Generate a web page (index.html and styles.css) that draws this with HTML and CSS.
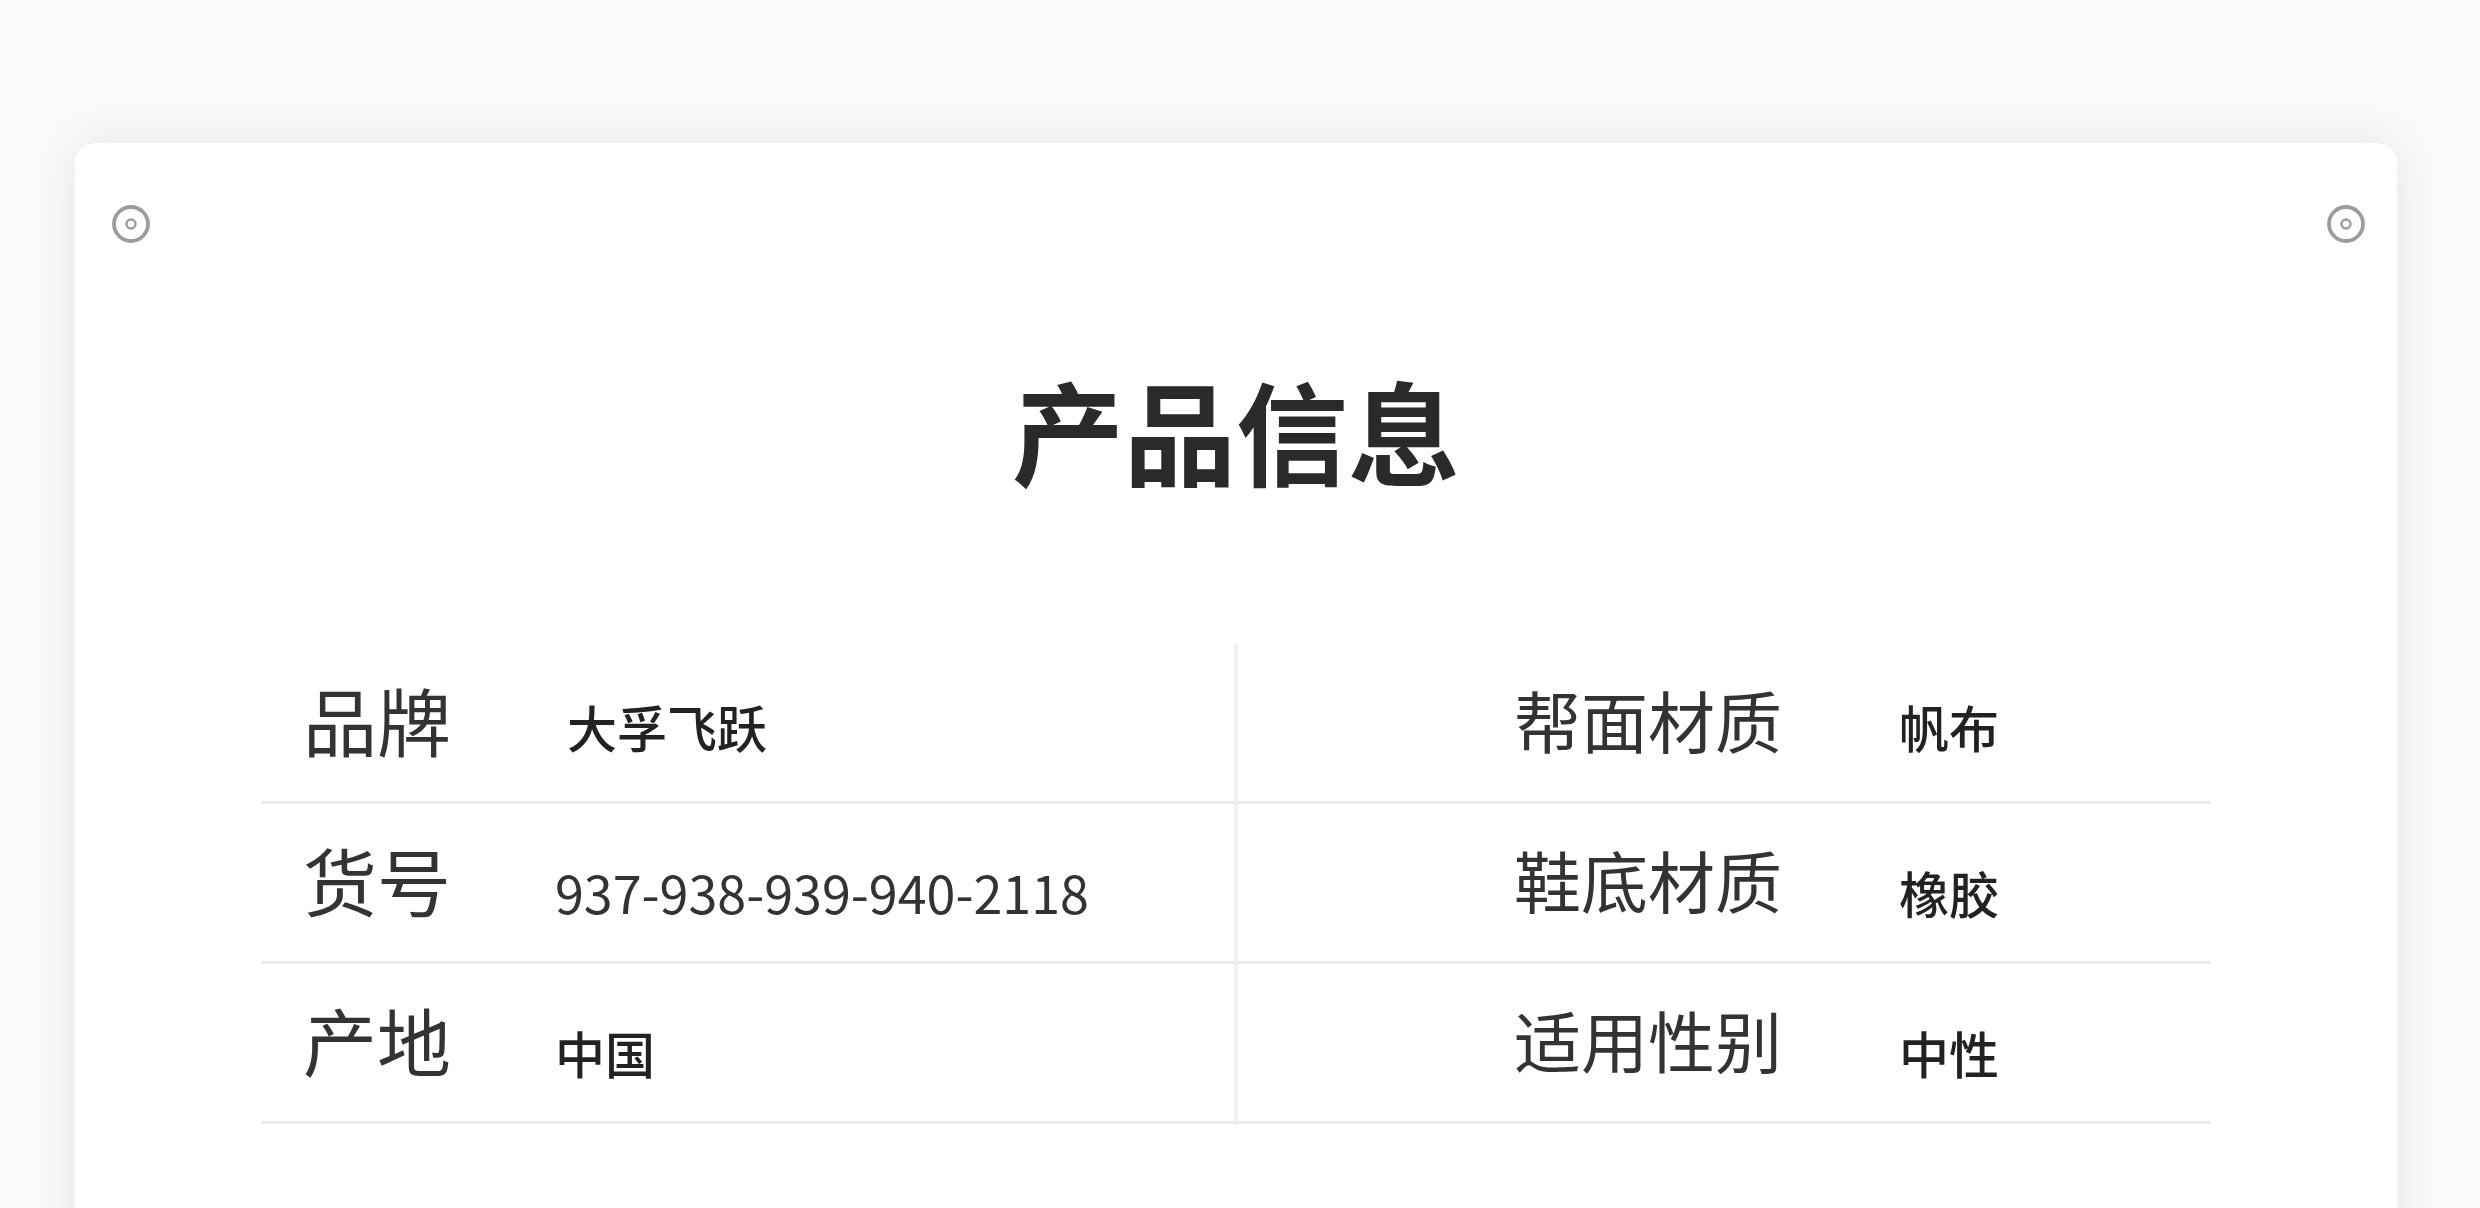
FILE: index.html
```html
<!DOCTYPE html>
<html lang="zh-CN">
<head>
    <meta charset="UTF-8">
    <meta name="viewport" content="width=device-width, initial-scale=1.0">
    <title>产品信息</title>
    <link rel="stylesheet" href="styles.css">
</head>
<body>
    <main class="card">
        <div class="pins">
            <svg class="pin" width="40" height="40" viewBox="0 0 40 40">
                <circle cx="20" cy="20" r="17" fill="none" stroke="#9c9c9c" stroke-width="3.8"/>
                <circle cx="20" cy="20" r="4.5" fill="none" stroke="#9c9c9c" stroke-width="2.4"/>
            </svg>
            <svg class="pin" width="40" height="40" viewBox="0 0 40 40">
                <circle cx="20" cy="20" r="17" fill="none" stroke="#9c9c9c" stroke-width="3.8"/>
                <circle cx="20" cy="20" r="4.5" fill="none" stroke="#9c9c9c" stroke-width="2.4"/>
            </svg>
        </div>

        <h1 class="title">产品信息</h1>

        <section class="specs">
            <div class="row">
                <div class="cell cell-left">
                    <span class="label">品牌</span>
                    <span class="value value-brand">大孚飞跃</span>
                </div>
                <div class="cell cell-right">
                    <span class="label">帮面材质</span>
                    <span class="value">帆布</span>
                </div>
            </div>
            <div class="row row-low">
                <div class="cell cell-left">
                    <span class="label">货号</span>
                    <span class="value value-num">937-938-939-940-2118</span>
                </div>
                <div class="cell cell-right">
                    <span class="label">鞋底材质</span>
                    <span class="value">橡胶</span>
                </div>
            </div>
            <div class="row row-low">
                <div class="cell cell-left">
                    <span class="label">产地</span>
                    <span class="value">中国</span>
                </div>
                <div class="cell cell-right">
                    <span class="label">适用性别</span>
                    <span class="value">中性</span>
                </div>
            </div>
        </section>
    </main>
</body>
</html>
```

FILE: styles.css
```css
body {
    margin: 0;
    padding: 143px 0 0 75px;
    background-color: #fafafa;
    font-family: "Noto Sans CJK SC", "Noto Sans", sans-serif;
    color: #333;
}

.card {
    width: 2322px;
    min-height: 1200px;
    background-color: #fff;
    border-radius: 20px;
    box-shadow: 0 0 50px rgba(0, 0, 0, 0.09);
}

.pins {
    display: flex;
    justify-content: space-between;
    padding: 61px 31px 0 36px;
}

.pin {
    display: block;
}

.title {
    margin: 129px 0 0;
    font-size: 112px;
    line-height: 1;
    font-weight: 700;
    text-align: center;
    color: #2a2a2a;
}

.specs {
    width: 1948px;
    margin: 159px auto 0;
}

.row {
    display: grid;
    grid-template-columns: 976px 972px;
    height: 160px;
    border-bottom: 3px solid #eaeaea;
    box-sizing: border-box;
}

.cell {
    display: flex;
    align-items: center;
    height: 100%;
    padding-bottom: 8px;
    box-sizing: border-box;
}

.cell-left {
    padding-left: 41px;
    border-right: 4px solid #f1f1f1;
}

.cell-right {
    padding-left: 276px;
}

.label {
    font-size: 74px;
    line-height: 1;
    font-weight: 400;
    color: #333;
}

.cell-left .label {
    width: 252px;
}

.cell-right .label {
    width: 385px;
    font-size: 67px;
}

.value {
    font-size: 50px;
    line-height: 1;
    font-weight: 500;
    color: #222;
    padding-top: 14px;
}

.row-low .value {
    padding-top: 26px;
}

.value-brand {
    padding-left: 12px;
}

.value-num {
    font-size: 52px;
    font-weight: 400;
    color: #333;
}
```
